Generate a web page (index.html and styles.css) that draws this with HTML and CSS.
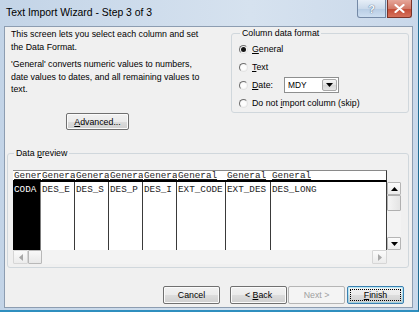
FILE: index.html
```html
<!DOCTYPE html>
<html>
<head>
<meta charset="utf-8">
<title>Text Import Wizard - Step 3 of 3</title>
<link rel="stylesheet" href="styles.css">
</head>
<body>
<div class="window">
  <div class="titlebar">
    <span class="title">Text Import Wizard - Step 3 of 3</span>
    <div class="caption-buttons">
      <span class="cap-btn help">?</span>
      <span class="cap-btn close"><svg width="11" height="9" viewBox="0 0 11 9"><path d="M1.5 1 L9.5 8 M9.5 1 L1.5 8" stroke="#fff" stroke-width="2.2" stroke-linecap="round"/></svg></span>
    </div>
  </div>
  <div class="client">
    <div class="top">
      <div class="intro">
        <p class="p1">This screen lets you select each column and set<br>the Data Format.</p>
        <p class="p2">'General' converts numeric values to numbers,<br>date values to dates, and all remaining values to<br>text.</p>
        <button class="btn advanced"><span><u>A</u>dvanced...</span></button>
      </div>
      <fieldset class="group format">
        <legend>Column data format</legend>
        <div class="radio-row"><span class="radio checked"></span><span class="rlabel"><u>G</u>eneral</span></div>
        <div class="radio-row"><span class="radio"></span><span class="rlabel"><u>T</u>ext</span></div>
        <div class="radio-row"><span class="radio"></span><span class="rlabel date-label"><u>D</u>ate:</span>
          <span class="select"><span class="select-val">MDY</span><span class="select-btn"><svg width="7" height="4" viewBox="0 0 7 4"><path d="M0 0 H7 L3.5 4 Z" fill="#000"/></svg></span></span>
        </div>
        <div class="radio-row"><span class="radio"></span><span class="rlabel">Do not <u>i</u>mport column (skip)</span></div>
      </fieldset>
    </div>
    <fieldset class="group preview">
      <legend>Data <u>p</u>review</legend>
      <div class="pv-area">
        <div class="tbl">
          <div class="col c1 selected"><div class="hd">Gener</div><div class="bd">CODA</div></div>
          <div class="col c2"><div class="hd">Genera</div><div class="bd">DES_E</div></div>
          <div class="col c2"><div class="hd">Genera</div><div class="bd">DES_S</div></div>
          <div class="col c2"><div class="hd">Genera</div><div class="bd">DES_P</div></div>
          <div class="col c2"><div class="hd">Genera</div><div class="bd">DES_I</div></div>
          <div class="col c6"><div class="hd">General</div><div class="bd">EXT_CODE</div></div>
          <div class="col c7"><div class="hd">General</div><div class="bd">EXT_DES</div></div>
          <div class="col c8"><div class="hd">General</div><div class="bd">DES_LONG</div></div>
        </div>
        <div class="vscroll">
          <span class="sb-btn"><svg width="7" height="4" viewBox="0 0 7 4"><path d="M0 4 H7 L3.5 0 Z" fill="#000"/></svg></span>
          <span class="sb-thumb v"></span>
          <span class="sb-track"></span>
          <span class="sb-btn"><svg width="7" height="4" viewBox="0 0 7 4"><path d="M0 0 H7 L3.5 4 Z" fill="#000"/></svg></span>
        </div>
        <div class="hscroll">
          <span class="sb-btn h"><svg width="4" height="7" viewBox="0 0 4 7"><path d="M4 0 V7 L0 3.5 Z" fill="#a8a8a8"/></svg></span>
          <span class="sb-thumb h"></span>
          <span class="sb-track"></span>
          <span class="sb-btn h"><svg width="4" height="7" viewBox="0 0 4 7"><path d="M0 0 V7 L4 3.5 Z" fill="#a8a8a8"/></svg></span>
        </div>
        <div class="corner"></div>
      </div>
    </fieldset>
    <div class="buttons">
      <button class="btn"><span>Cancel</span></button>
      <button class="btn back"><span>&lt; <u>B</u>ack</span></button>
      <button class="btn next" disabled><span>Next &gt;</span></button>
      <button class="btn finish"><span class="focus"><span><u>F</u>inish</span></span></button>
    </div>
  </div>
</div>
</body>
</html>
```
FILE: styles.css
```css
* { box-sizing: border-box; }
html, body { margin: 0; padding: 0; }
body {
  width: 419px;
  height: 312px;
  overflow: hidden;
  font-family: "Liberation Sans", Arial, sans-serif;
  font-size: 8.8px;
  color: #000;
  background: #fff;
}
u { text-decoration: underline; text-underline-offset: 1px; }

.window {
  width: 419px;
  height: 312px;
  display: flex;
  flex-direction: column;
  background: linear-gradient(to right, #c3d4e7, #d6e2ef 60%, #c9d8ea);
  border-right: 1px solid #1f6c93;
  border-bottom: 2px solid #2f8fbf;
}

.titlebar {
  flex: 0 0 26px;
  display: flex;
  align-items: flex-start;
  padding-left: 6px;
}
.title {
  font-size: 10.4px;
  line-height: 26px;
  color: #000;
}
.caption-buttons {
  margin-left: auto;
  margin-right: 6px;
  display: flex;
  gap: 1px;
}
.cap-btn {
  height: 18px;
  border: 1px solid #7489a6;
  border-top: none;
  display: flex;
  align-items: center;
  justify-content: center;
}
.help {
  width: 29px;
  border-radius: 0 0 0 3px;
  background: linear-gradient(#e6eef7, #cbdaeb 50%, #b7cce4 51%, #cddef0);
  color: #f4f8fc;
  font-weight: bold;
  font-size: 11px;
  text-shadow: 0 0 1px #56708f, 0 0 1px #56708f;
}
.close {
  width: 25px;
  border-radius: 0 0 3px 0;
  border-color: #7a3328;
  background: linear-gradient(#e6a699, #d27a68 50%, #c24a34 51%, #d6715b);
}

.client {
  flex: 1;
  margin: 0 5px 2px 4px;
  border: 1px solid #8d9db1;
  background: #f0f0f0;
  display: flex;
  flex-direction: column;
}

.top {
  display: flex;
  align-items: flex-start;
}
.intro {
  width: 226px;
  padding-left: 6px;
}
.intro p {
  margin: 0;
  line-height: 12.5px;
  white-space: nowrap;
}
.p1 { padding-top: 1px; }
.p2 { margin-top: 5px !important; }

.btn {
  font-family: "Liberation Sans", Arial, sans-serif;
  font-size: 8.8px;
  color: #000;
  height: 18px;
  width: 57px;
  padding: 0;
  border: 1px solid #707070;
  border-radius: 2px;
  background: linear-gradient(#f2f2f2, #ebebeb 50%, #dddddd 51%, #cfcfcf);
  box-shadow: inset 0 0 0 1px #fbfbfb;
  display: flex;
  align-items: center;
  justify-content: center;
  white-space: nowrap;
}
.advanced {
  width: 63px;
  height: 17px;
  margin-top: 17.5px;
  margin-left: 55px;
}

.group {
  margin: 0;
  padding: 0;
  border: 1px solid #d0d7dc;
  border-radius: 3px;
  min-width: 0;
}
.group legend {
  padding: 0 2px;
  margin-left: 1px;
  line-height: 10px;
}

.format {
  width: 178px;
  margin-left: auto;
  margin-right: 3px;
  margin-top: 1px;
  padding: 2px 0 0 7px;
}
.radio-row {
  height: 18px;
  display: flex;
  align-items: center;
}
.radio {
  width: 9px;
  height: 9px;
  border-radius: 50%;
  border: 1px solid;
  border-color: #6f6f6f #e4e4e4 #e4e4e4 #6f6f6f;
  background: radial-gradient(circle, #fdfdfd 40%, #e9e9e9);
  margin-right: 4px;
  flex: 0 0 auto;
  display: flex;
  align-items: center;
  justify-content: center;
}
.radio.checked::after {
  content: "";
  width: 5px;
  height: 5px;
  border-radius: 50%;
  background: #141414;
}
.rlabel { white-space: nowrap; }
.date-label { width: 32px; }
.select {
  width: 55px;
  height: 16px;
  border: 1px solid #8e8f8f;
  background: #fff;
  display: flex;
  align-items: center;
  padding: 1px;
}
.select-val {
  flex: 1;
  padding-left: 2px;
  font-size: 8.4px;
}
.select-btn {
  width: 15px;
  height: 12px;
  border: 1px solid #a8a8a8;
  border-radius: 2px;
  background: linear-gradient(#f5f5f5, #e3e3e3 50%, #d6d6d6 51%, #e6e6e6);
  display: flex;
  align-items: center;
  justify-content: center;
}

.preview {
  margin: 18px 0 0 2px;
  width: 402px;
  padding: 12px 0 3px 5px;
}
.pv-area {
  display: grid;
  grid-template-columns: 374px 14px;
  grid-template-rows: 12px 68px 14px;
}
.tbl {
  grid-column: 1;
  grid-row: 1 / 3;
  display: flex;
  background: #fff;
  font-family: "Liberation Mono", "Courier New", monospace;
  font-size: 9.3px;
  color: #1e1e1e;
  overflow: hidden;
}
.col {
  display: flex;
  flex-direction: column;
  flex: 0 0 auto;
  overflow: hidden;
  white-space: nowrap;
}
.c1 { width: 28px; }
.c2 { width: 34px; }
.c6 { width: 49px; }
.c7 { width: 45px; }
.c8 { flex: 1 1 auto; }
.hd {
  height: 12px;
  border-top: 1px solid #8a8a8a;
  border-bottom: 2px solid #000;
  line-height: 9px;
  padding-left: 1px;
  text-decoration: underline;
  text-underline-offset: 1px;
  overflow: hidden;
}
.bd {
  flex: 1;
  border-right: 1px solid #3a3a3a;
  padding: 3px 0 0 1px;
  line-height: 10px;
}
.c8 .hd { border-right: 1px solid #3a3a3a; }
.selected .bd {
  background: #000;
  color: #fff;
  border-right-color: #7d7d7d;
}

.vscroll {
  grid-column: 2;
  grid-row: 2;
  display: flex;
  flex-direction: column;
  background: #f3f3f3;
}
.hscroll {
  grid-column: 1;
  grid-row: 3;
  display: flex;
  background: #f3f3f3;
}
.corner {
  grid-column: 2;
  grid-row: 3;
  background: #f0f0f0;
}
.sb-btn {
  flex: 0 0 13px;
  height: 13px;
  border: 1px solid #b5b5b5;
  border-radius: 1px;
  background: linear-gradient(#fbfbfb, #ececec);
  display: flex;
  align-items: center;
  justify-content: center;
}
.sb-btn.h {
  flex: 0 0 15px;
  height: 14px;
  width: 15px;
  border-color: #d6d6d6;
}
.sb-thumb.v {
  flex: 0 0 16px;
  border: 1px solid #b0b0b0;
  border-radius: 1px;
  background: linear-gradient(to right, #f5f5f5, #e4e4e4);
}
.sb-thumb.h {
  flex: 0 0 14px;
  height: 14px;
  border: 1px solid #b8b8b8;
  border-radius: 1px;
  background: linear-gradient(#f8f8f8, #e8e8e8);
}
.sb-track { flex: 1; }

.buttons {
  display: flex;
  margin-top: 18px;
  padding-left: 158px;
}
.back { margin-left: 10px; }
.next { margin-left: 1px; color: #a0a0a0; border-color: #b5b5b5; background: #f4f4f4; box-shadow: none; }
.finish { margin-left: 2px; border-color: #3c7fb1; box-shadow: inset 0 0 0 1px #48d9fb55; }
.focus {
  border: 1px dotted #000;
  width: 51px;
  height: 12px;
  display: flex;
  align-items: center;
  justify-content: center;
}
```
